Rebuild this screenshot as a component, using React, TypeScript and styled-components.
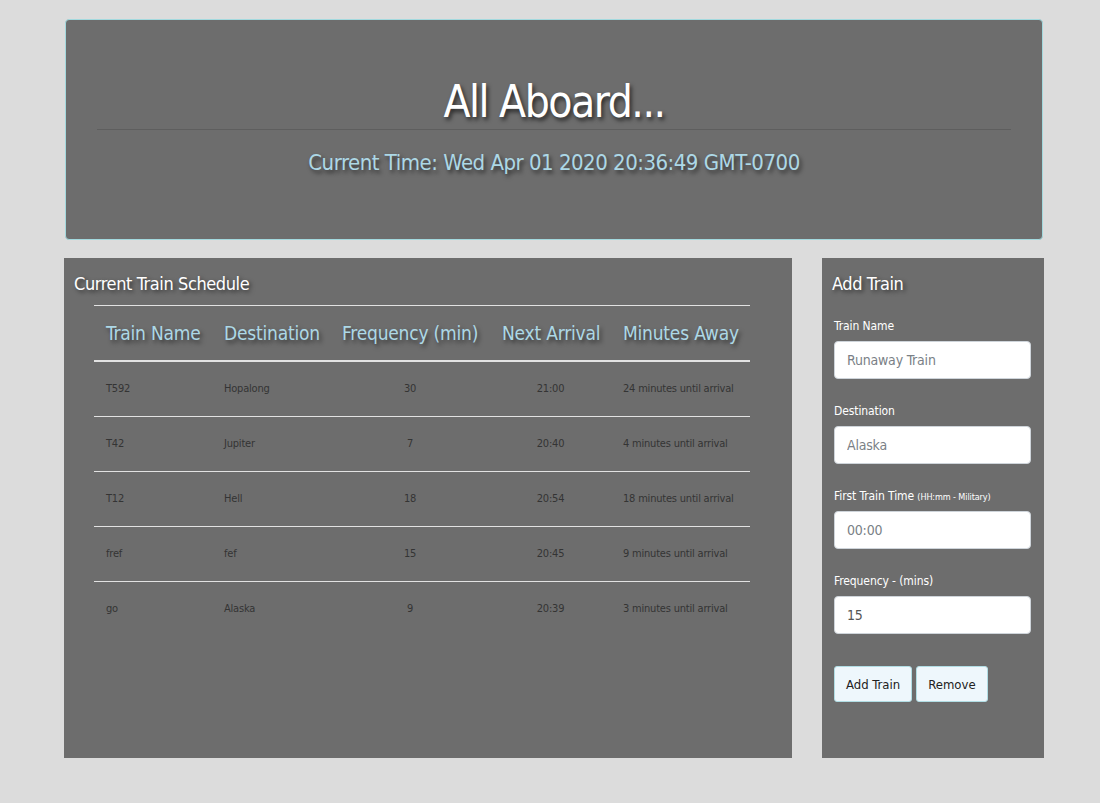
import styled, { createGlobalStyle } from "styled-components"

const GlobalStyle = createGlobalStyle`
  html, body {
    margin: 0;
    padding: 0;
    background: #dcdcdc;
  }
  body {
    font-family: "DejaVu Sans Condensed", "Liberation Sans", sans-serif;
  }
  * {
    box-sizing: border-box;
  }
`

const Page = styled.div`
  width: 980px;
  margin-left: 64px;
  padding-top: 19px;
`

const Jumbotron = styled.header`
  margin: 0 1px;
  height: 221px;
  padding: 0 31px;
  background: #6d6d6d;
  border: 1px solid #a3d9de;
  border-radius: 4px;
  text-align: center;
`

const Heading = styled.h1`
  margin: 56px 0 0;
  font-size: 44px;
  line-height: 52px;
  letter-spacing: -1.5px;
  font-weight: normal;
  color: #fff;
  text-shadow: 2px 3px 4px rgba(0, 0, 0, 0.65);
`

const Rule = styled.hr`
  margin: 1px 0 0;
  height: 1px;
  border: 0;
  background: #5e5e5e;
`

const Clock = styled.h4`
  margin: 18px 0 0;
  font-size: 22px;
  line-height: 30px;
  letter-spacing: -0.5px;
  font-weight: normal;
  color: #add8e6;
  text-shadow: 2px 3px 4px rgba(0, 0, 0, 0.6);
`

const Columns = styled.main`
  display: flex;
  gap: 30px;
  margin-top: 18px;
`

const Panel = styled.section<{ $width: number }>`
  width: ${(p) => p.$width}px;
  height: 500px;
  background: #6d6d6d;
  padding: 13px 13px 0 10px;
`

const PanelTitle = styled.h3`
  margin: 0;
  font-size: 18px;
  line-height: 25px;
  letter-spacing: -0.4px;
  font-weight: normal;
  color: #fff;
  text-shadow: 2px 2px 4px rgba(0, 0, 0, 0.6);
`

const Table = styled.table`
  margin: 9px 0 0 20px;
  width: 656px;
  table-layout: fixed;
  border-collapse: separate;
  border-spacing: 0;
`

const HeadCell = styled.th`
  padding: 0 12px;
  border-top: 1px solid #e2e2e2;
  border-bottom: 2px solid #e2e2e2;
  line-height: 54px;
  font-size: 19px;
  letter-spacing: -0.2px;
  font-weight: normal;
  text-align: left;
  white-space: nowrap;
  color: #add8e6;
  text-shadow: 2px 3px 4px rgba(0, 0, 0, 0.55);
`

const Row = styled.tr`
  &:not(:first-child) td {
    border-top: 1px solid #e2e2e2;
  }
`

const Cell = styled.td<{ $center?: boolean }>`
  padding: 0 12px;
  line-height: 54px;
  font-size: 11px;
  letter-spacing: -0.2px;
  white-space: nowrap;
  color: #343434;
  text-align: ${(p) => (p.$center ? "center" : "left")};
`

const Form = styled.form`
  margin-top: 22px;
  padding-left: 2px;
`

const Group = styled.div`
  margin-bottom: 24px;
`

const Label = styled.label`
  display: block;
  margin-bottom: 7px;
  font-size: 12px;
  line-height: 16px;
  letter-spacing: -0.1px;
  color: #fff;
`

const Small = styled.small`
  font-size: 9px;
  line-height: 1;
`

const Input = styled.input`
  display: block;
  width: 197px;
  height: 38px;
  padding: 0 12px;
  border: 1px solid #ced4da;
  border-radius: 4px;
  background: #fff;
  font-family: inherit;
  font-size: 14px;
  letter-spacing: -0.2px;
  color: #555;
  &::placeholder {
    color: #7a7f86;
  }
`

const Buttons = styled.div`
  display: flex;
  gap: 4px;
  margin-top: 32px;
`

const Button = styled.button`
  height: 36px;
  padding: 0 11px;
  background: #eef7fc;
  border: 1px solid #b1dde4;
  border-radius: 3px;
  font-family: inherit;
  font-size: 13px;
  color: #222;
`

const columns = [118, 118, 160, 121, 139]

const trains = [
  { name: "T592", dest: "Hopalong", freq: 30, next: "21:00", away: 24 },
  { name: "T42", dest: "Jupiter", freq: 7, next: "20:40", away: 4 },
  { name: "T12", dest: "Hell", freq: 18, next: "20:54", away: 18 },
  { name: "fref", dest: "fef", freq: 15, next: "20:45", away: 9 },
  { name: "go", dest: "Alaska", freq: 9, next: "20:39", away: 3 },
]

const App = () => (
  <>
    <GlobalStyle />
    <Page>
      <Jumbotron>
        <Heading>All Aboard...</Heading>
        <Rule />
        <Clock>Current Time: Wed Apr 01 2020 20:36:49 GMT-0700</Clock>
      </Jumbotron>
      <Columns>
        <Panel $width={728}>
          <PanelTitle>Current Train Schedule</PanelTitle>
          <Table>
            <colgroup>
              {columns.map((w, i) => (
                <col key={i} style={{ width: w }} />
              ))}
            </colgroup>
            <thead>
              <tr>
                <HeadCell>Train Name</HeadCell>
                <HeadCell>Destination</HeadCell>
                <HeadCell>Frequency (min)</HeadCell>
                <HeadCell>Next Arrival</HeadCell>
                <HeadCell>Minutes Away</HeadCell>
              </tr>
            </thead>
            <tbody>
              {trains.map((t) => (
                <Row key={t.name}>
                  <Cell>{t.name}</Cell>
                  <Cell>{t.dest}</Cell>
                  <Cell $center>{t.freq}</Cell>
                  <Cell $center>{t.next}</Cell>
                  <Cell>{t.away} minutes until arrival</Cell>
                </Row>
              ))}
            </tbody>
          </Table>
        </Panel>
        <Panel $width={222}>
          <PanelTitle>Add Train</PanelTitle>
          <Form>
            <Group>
              <Label>Train Name</Label>
              <Input placeholder="Runaway Train" />
            </Group>
            <Group>
              <Label>Destination</Label>
              <Input placeholder="Alaska" />
            </Group>
            <Group>
              <Label>
                First Train Time <Small>(HH:mm - Military)</Small>
              </Label>
              <Input placeholder="00:00" />
            </Group>
            <Group>
              <Label>Frequency - (mins)</Label>
              <Input defaultValue="15" />
            </Group>
            <Buttons>
              <Button type="button">Add Train</Button>
              <Button type="button">Remove</Button>
            </Buttons>
          </Form>
        </Panel>
      </Columns>
    </Page>
  </>
)

export default App
